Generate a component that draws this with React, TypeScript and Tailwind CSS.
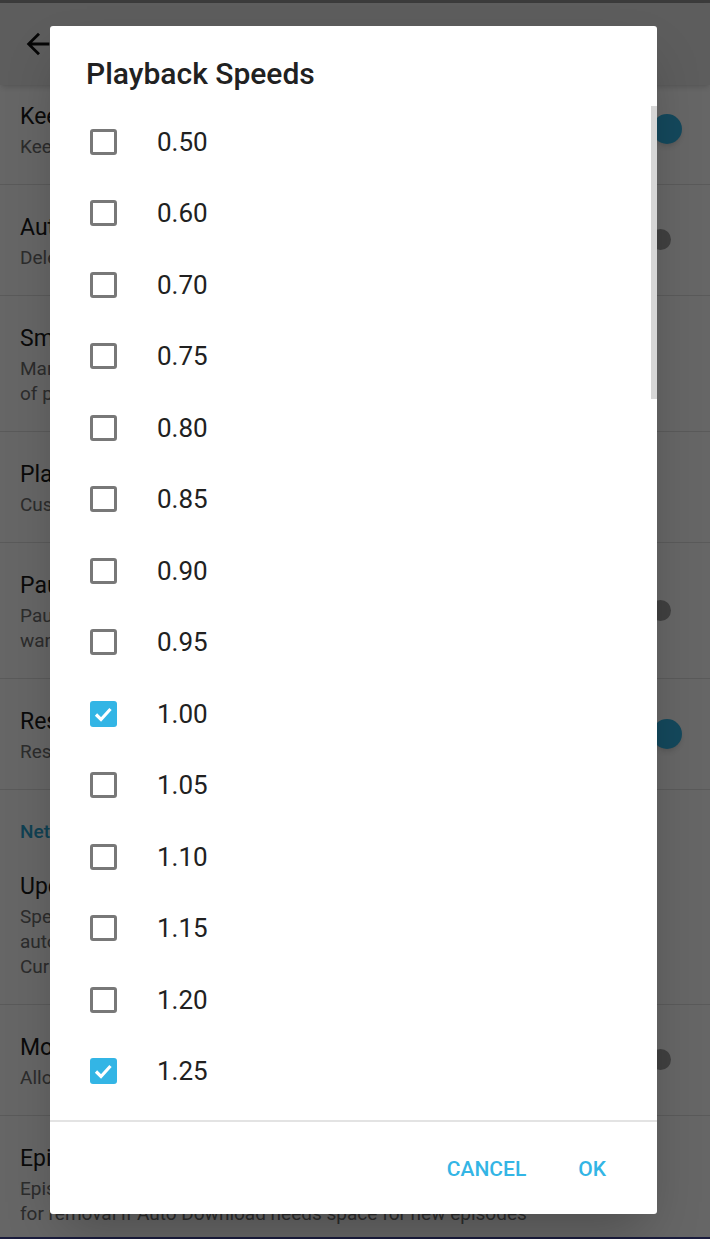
import React from 'react';

type Toggle = 'on' | 'off' | undefined;

const speeds = [
  '0.50', '0.60', '0.70', '0.75', '0.80', '0.85', '0.90', '0.95',
  '1.00', '1.05', '1.10', '1.15', '1.20', '1.25', '1.30', '1.40', '1.50',
];
const checked = ['1.00', '1.25', '1.50'];

function Switch({ state }: { state: Toggle }) {
  if (!state) return null;
  return (
    <div className="relative w-[52px] h-[30px] mr-[28px] shrink-0">
      {state === 'on' ? (
        <>
          <div className="absolute left-[4px] right-[4px] top-[8px] h-[14px] rounded-full bg-[#9fd9ef]" />
          <div className="absolute right-0 top-0 w-[30px] h-[30px] rounded-full bg-[#33b5e5] shadow-md" />
        </>
      ) : (
        <div className="absolute left-[20px] top-[4px] w-[21px] h-[21px] rounded-full bg-[#a0a0a0]" />
      )}
    </div>
  );
}

function SettingRow({ title, lines, toggle }: { title: string; lines: string[]; toggle?: Toggle }) {
  return (
    <div className="flex items-center border-b border-[#e0e0e0] pl-[20px]">
      <div className="flex-1 pt-[28px] pb-[25px] whitespace-nowrap">
        <div className="text-[23px] leading-[30px] text-[#1a1a1a]">{title}</div>
        <div className="mt-[2px] text-[19px] leading-[25px] text-[#6e6e6e]">
          {lines.map((l) => (
            <div key={l}>{l}</div>
          ))}
        </div>
      </div>
      <Switch state={toggle} />
    </div>
  );
}

function SpeedRow({ value }: { value: string }) {
  const on = checked.includes(value);
  return (
    <div className="h-[71.5px] flex items-center pl-[40px] shrink-0">
      {on ? (
        <div className="w-[27px] h-[26px] rounded-[3px] bg-[#33b5e5] flex items-center justify-center">
          <svg width="27" height="26" viewBox="0 0 27 26">
            <polyline points="6,13.5 11,18.5 20.5,8" fill="none" stroke="#fff" strokeWidth="3.2" />
          </svg>
        </div>
      ) : (
        <div className="w-[27px] h-[26px] rounded-[3px] border-[3px] border-[#787878]" />
      )}
      <span className="ml-[40px] text-[26px] text-[#212121] leading-none">{value}</span>
    </div>
  );
}

export default function App() {
  return (
    <div className="relative h-[1239px] overflow-hidden bg-white font-['Roboto','Liberation_Sans',sans-serif]">
      {/* settings screen behind the dialog */}
      <div className="h-full flex flex-col">
        <div className="h-[3px] bg-[#939393]" />
        <header className="relative z-10 h-[82px] bg-[#e9e9e9] flex items-center pl-[21px] shadow-md shrink-0">
          <svg width="34" height="34" viewBox="0 0 24 24" fill="#111">
            <path d="M20 11H7.83l5.59-5.59L12 4l-8 8 8 8 1.41-1.41L7.83 13H20v-2z" />
          </svg>
          <span className="ml-[40px] text-[25px] font-medium text-[#212121]">Playback</span>
        </header>
        <div className="flex-1 overflow-hidden">
          <div className="mt-[-11px]">
            <SettingRow title="Keep Skipped Episodes" lines={['Keep episodes when they are skipped']} toggle="on" />
            <SettingRow title="Auto Delete" lines={['Delete episodes when playback completes']} toggle="off" />
            <SettingRow
              title="Smart Mark as Played"
              lines={['Mark episodes as played even if less than a certain amount of seconds', 'of playing time is still remaining']}
            />
            <SettingRow title="Playback Speeds" lines={['Customize the number of speeds available']} />
            <SettingRow
              title="Pause for Interruptions"
              lines={['Pause playback instead of lowering volume when', 'wants to play a sound']}
              toggle="off"
            />
            <SettingRow title="Resume after Call" lines={['Resume playback after a phone call']} toggle="on" />
            <div className="h-[54px] pl-[20px] pt-[30px] text-[19px] leading-[24px] font-medium text-[#2aa2cf]">Network</div>
            <SettingRow
              title="Update interval"
              lines={['Specify an interval or a specific time', 'automatically check for new episodes', 'Currently: Every 12 hours']}
            />
            <SettingRow title="Mobile Updates" lines={['Allow updates over mobile data']} toggle="off" />
            <SettingRow
              title="Episode Cleanup"
              lines={["Episodes that aren't in the queue and aren't favorites should be eligible", 'for removal if Auto Download needs space for new episodes']}
            />
          </div>
        </div>
        <div className="h-[2px] bg-[#414898] shrink-0" />
      </div>

      {/* dim layer + dialog */}
      <div className="absolute inset-0 z-20 bg-black/60">
        <div className="ml-[50px] mt-[26px] w-[607px] h-[1188px] bg-white rounded-[3px] shadow-2xl flex flex-col overflow-hidden">
          <h2 className="pt-[30px] pl-[36px] text-[30px] leading-[36px] font-medium text-[#212121]">Playback Speeds</h2>
          <div className="relative mt-[14px] h-[1014px] overflow-hidden flex flex-col shrink-0">
            {speeds.map((s) => (
              <SpeedRow key={s} value={s} />
            ))}
            <div className="absolute right-0 top-0 w-[6px] h-[293px] bg-[#d6d6d6]" />
          </div>
          <div className="h-[2px] bg-[#e3e3e3] shrink-0" />
          <div className="flex-1 flex items-center justify-end gap-[52px] pr-[51px] pt-[4px] text-[21px] font-medium text-[#33b5e5]">
            <span>CANCEL</span>
            <span>OK</span>
          </div>
        </div>
      </div>
    </div>
  );
}
